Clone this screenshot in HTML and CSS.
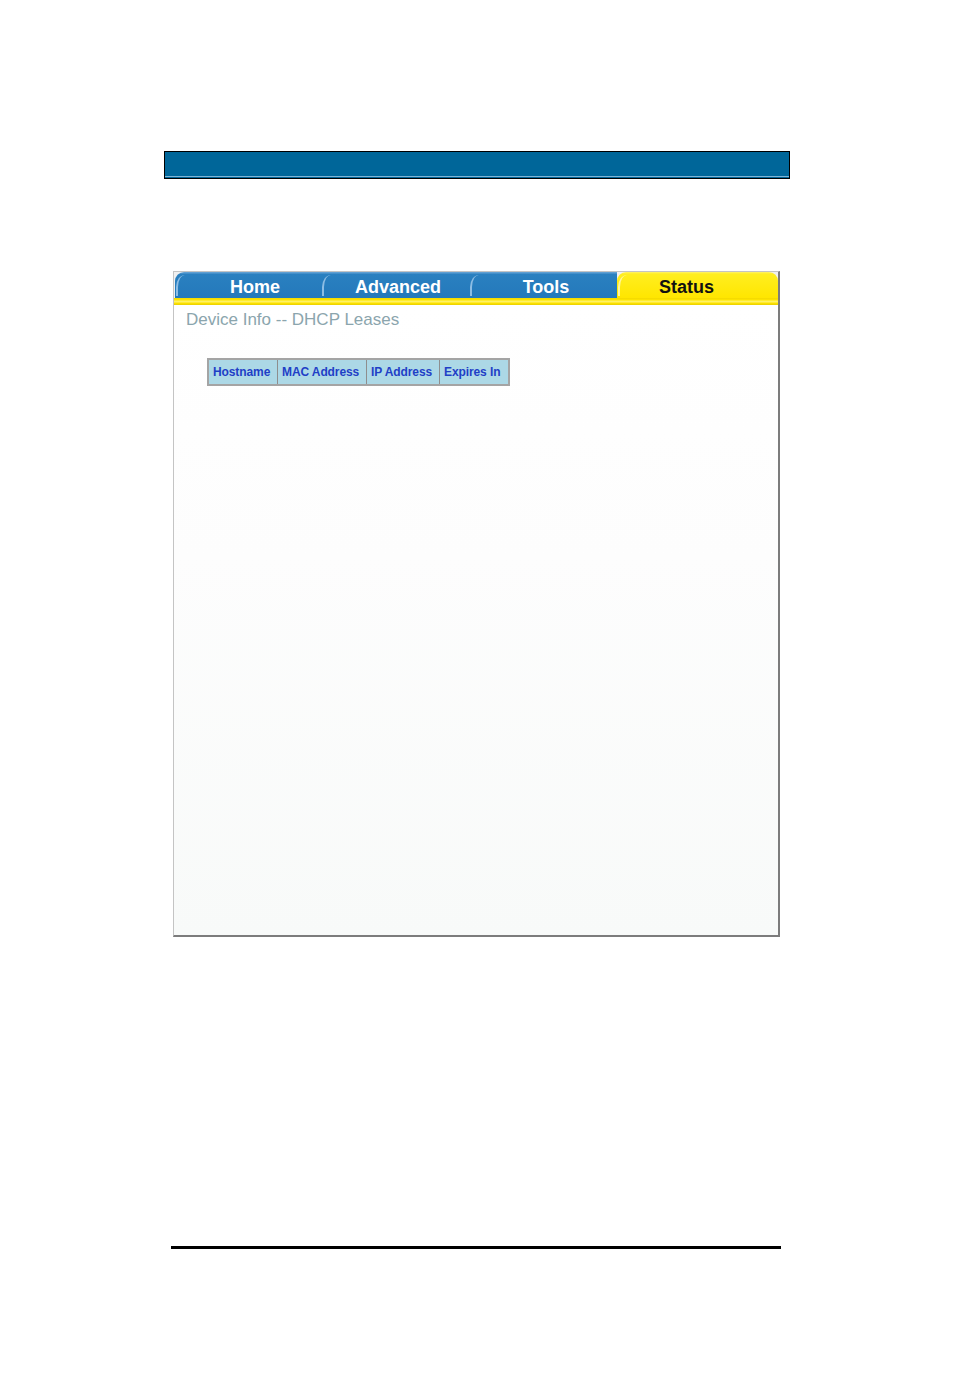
FILE: index.html
```html
<!DOCTYPE html>
<html>
<head>
<meta charset="utf-8">
<link rel="stylesheet" href="styles.css">
</head>
<body>
<div class="page">
  <div class="topbar"></div>
  <div class="frame">
    <div class="tabs">
      <div class="tab tab-home">Home</div>
      <div class="tab tab-adv">Advanced</div>
      <div class="tab tab-tools">Tools</div>
      <div class="tab tab-status">Status</div>
    </div>
    <div class="band"></div>
    <div class="content">
      <div class="title">Device Info -- DHCP Leases</div>
      <table class="leases">
        <tr>
          <th class="c1">Hostname</th>
          <th class="c2">MAC Address</th>
          <th class="c3">IP Address</th>
          <th class="c4">Expires In</th>
        </tr>
      </table>
    </div>
  </div>
  <div class="rule"></div>
</div>
</body>
</html>
```

FILE: styles.css
```css
html, body {
  margin: 0;
  padding: 0;
  background: #ffffff;
  font-family: "Liberation Sans", Arial, sans-serif;
}

.page {
  width: 954px;
  height: 1382px;
  padding-top: 151px;
  box-sizing: border-box;
}

.topbar {
  margin-left: 164px;
  width: 626px;
  height: 28px;
  box-sizing: border-box;
  border: 1px solid #000;
  background: #006699;
  box-shadow: inset 0 -1px 0 #006699, inset 0 -2px 0 #7fb3d3;
}

.frame {
  margin-top: 92px;
  margin-left: 173px;
  width: 607px;
  height: 666px;
  box-sizing: border-box;
  border-top: 1px solid #c4c4c4;
  border-left: 1px solid #c4c4c4;
  border-right: 2px solid #7c7c7c;
  border-bottom: 2px solid #7c7c7c;
  display: flex;
  flex-direction: column;
  background: #ffffff;
}

.tabs {
  display: flex;
  height: 26px;
  padding-left: 1px;
  background: #f0f0f0;
}

.tab {
  position: relative;
  height: 26px;
  line-height: 30px;
  font-size: 18px;
  font-weight: bold;
  color: #ffffff;
  text-align: center;
  background: linear-gradient(#5f9fd3 0, #5f9fd3 1px, #2a80c0 2px, #2479bb 100%);
  box-sizing: border-box;
}

.tab::before {
  content: "";
  position: absolute;
  left: 1px;
  top: 3px;
  width: 8px;
  height: 21px;
  border-left: 2px solid #8dbde4;
  border-top-left-radius: 9px 12px;
}

.tab-home {
  width: 146px;
  padding-left: 14px;
  border-top-left-radius: 9px;
}

.tab-adv {
  width: 148px;
  padding-left: 6px;
}

.tab-tools {
  width: 148px;
  padding-left: 6px;
}

.tab-status {
  width: 161px;
  padding-right: 22px;
  color: #111111;
  background: linear-gradient(#fff26a 0, #ffee20 2px, #ffe600 100%);
  border-top-left-radius: 9px;
  border-top-right-radius: 9px;
}

.tab-status::before {
  border-left-color: #fff7a0;
}

.band {
  height: 7px;
  background: linear-gradient(#f3d800 0, #ffe600 2px, #fff266 3px, #fff266 4px, #ffe400 5px, #e9cf00 7px);
}

.content {
  flex: 1;
  padding: 5px 0 0 12px;
  background: linear-gradient(#ffffff 0, #fdfdfd 40%, #f8faf9 100%);
}

.title {
  font-size: 17px;
  line-height: 19px;
  color: #8ba5ad;
}

.leases {
  margin-top: 29px;
  margin-left: 21px;
  border-collapse: collapse;
  border: 2px solid #a4a4a4;
}

.leases th {
  height: 24px;
  padding: 0 4px 0 4px;
  background: #acd8e6;
  border: 1px solid #8e8e8e;
  font-size: 12px;
  font-weight: bold;
  color: #1f3fc6;
  text-align: left;
  white-space: nowrap;
  letter-spacing: -0.1px;
}

.leases .c1 { width: 60px; }
.leases .c2 { width: 80px; }
.leases .c3 { width: 64px; }
.leases .c4 { width: 60px; }

.rule {
  margin-top: 309px;
  margin-left: 171px;
  width: 610px;
  height: 3px;
  background: #000;
}
```
